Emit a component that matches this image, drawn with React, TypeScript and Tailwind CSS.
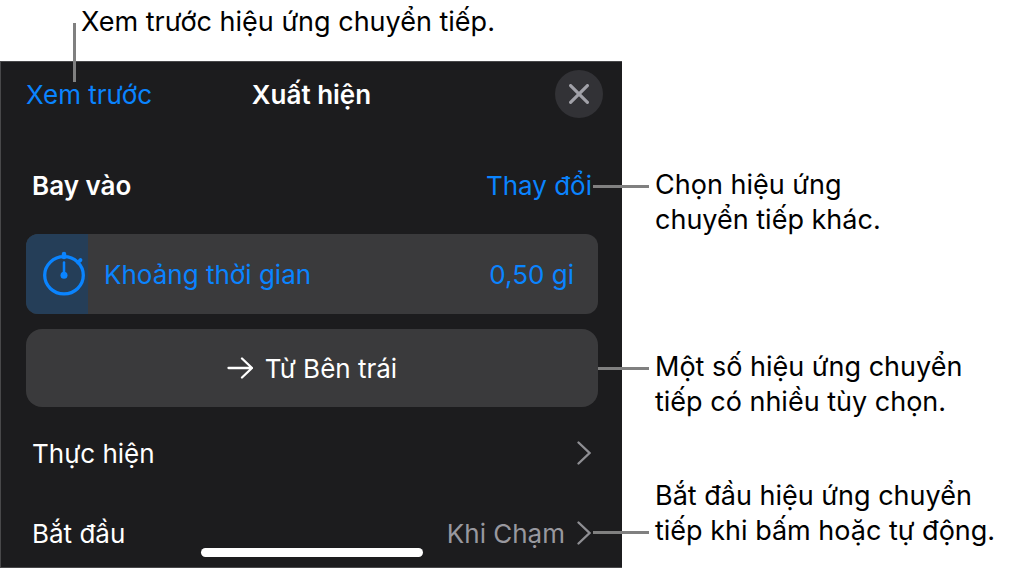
import { useState } from "react";

const CALLOUTS = [
  { id: "change", lines: ["Chọn hiệu ứng", "chuyển tiếp khác."], space: "mt-[106px]", leader: "top-[18px] w-14" },
  { id: "options", lines: ["Một số hiệu ứng chuyển", "tiếp có nhiều tùy chọn."], space: "mt-28", leader: "top-[18px] w-[51px]" },
  { id: "start", lines: ["Bắt đầu hiệu ứng chuyển", "tiếp khi bấm hoặc tự động."], space: "mt-[59px]", leader: "bottom-[14px] w-14" },
];

const MAX_SECONDS = 4.6;

export default function App() {
  const [duration, setDuration] = useState(0.5);

  return (
    <main className="min-h-screen bg-white font-['Inter',sans-serif] text-[27px] leading-[35px] text-black">
      {/* Top callout, its leader reaches down to the preview button */}
      <div className="relative h-[61px] pl-[81px] pt-1">
        <p className="whitespace-nowrap">Xem trước hiệu ứng chuyển tiếp.</p>
        <span className="absolute left-[73px] top-[23px] z-10 h-[59px] w-[3px] bg-[#808080]" />
      </div>

      <div className="grid grid-cols-[622fr_389fr] items-start">
        <BuildPanel duration={duration} onDuration={setDuration} />
        <aside className="min-w-0 pl-[33px]">
          {CALLOUTS.map((c) => (
            <div key={c.id} className={`relative whitespace-nowrap ${c.space}`}>
              <span className={`absolute right-full mr-[6px] h-[3px] bg-[#808080] ${c.leader}`} />
              <p>{c.lines[0]}<br />{c.lines[1]}</p>
            </div>
          ))}
        </aside>
      </div>
    </main>
  );
}

function BuildPanel({ duration, onDuration }: { duration: number; onDuration: (v: number) => void }) {
  return (
    <section className="relative border border-r-0 border-[#48484a] bg-[#1c1c1e] pb-1 text-[26px] text-white">
      <header className="grid h-16 grid-cols-[1fr_auto_1fr] items-center px-[19px]">
        <button className="justify-self-start pl-[6px] text-[#0a84ff]">Xem trước</button>
        <h1 className="font-semibold">Xuất hiện</h1>
        <button aria-label="Đóng" className="flex size-12 items-center justify-center justify-self-end rounded-full bg-[#323236] text-[#a1a1a8]">
          <svg viewBox="0 0 20 20" className="size-5" fill="none" stroke="currentColor" strokeWidth="3.200" strokeLinecap="round"><path d="M1.600 1.600 18.400 18.400M18.400 1.600 1.600 18.400" /></svg>
        </button>
      </header>

      <div className="mt-[27px] flex h-16 items-center justify-between pl-[31px] pr-[30px]">
        <h2 className="font-semibold">Bay vào</h2>
        <button className="text-[#0a84ff]">Thay đổi</button>
      </div>

      {/* Duration slider */}
      <div className="relative ml-[25px] mr-6 mt-[17px] flex h-20 items-center overflow-hidden rounded-xl bg-[#3a3a3c] pl-4 pr-6 text-[#0a84ff]">
        <div className="absolute inset-y-0 left-0 bg-[#253e58]" style={{ width: `${(duration / MAX_SECONDS) * 100}%` }} />
        <Stopwatch />
        <label htmlFor="duration" className="relative ml-[18px]">Khoảng thời gian</label>
        <output htmlFor="duration" className="relative ml-auto">{duration.toFixed(2).replace(".", ",")} gi</output>
        <input id="duration" type="range" min={0} max={MAX_SECONDS} step={0.01} value={duration} onChange={(e) => onDuration(Number(e.target.value))} className="absolute inset-0 size-full cursor-pointer opacity-0" />
      </div>

      <button className="ml-[25px] mt-[15px] flex h-[78px] w-[calc(100%-49px)] items-center justify-center gap-3 rounded-2xl bg-[#3a3a3c]">
        <svg viewBox="0 0 26 22" className="h-[22px] w-[26px]" fill="none" stroke="currentColor" strokeWidth="2.3" strokeLinecap="round" strokeLinejoin="round"><path d="M1.5 11H25M15 1.5 25 11 15 20.5" /></svg>
        Từ Bên trái
      </button>

      <div className="mt-4 flex flex-col gap-5">
        <Row label="Thực hiện" />
        <Row label="Bắt đầu" value="Khi Chạm" />
      </div>

      {/* Home indicator */}
      <div className="absolute bottom-[10px] left-1/2 h-[9px] w-[222px] -translate-x-1/2 rounded-full bg-white" />
    </section>
  );
}

function Row({ label, value }: { label: string; value?: string }) {
  return (
    <button className="flex h-[60px] w-full items-center px-[31px] text-left">
      <span>{label}</span>
      <span className="ml-auto text-[#98989f]">{value}</span>
      <svg viewBox="0 0 14 24" className="ml-3 h-6 w-[14px] text-[#8e8e93]" fill="none" stroke="currentColor" strokeWidth="2.3" strokeLinecap="round"><path d="M1.5 1.5 12.5 12 1.5 22.5" /></svg>
    </button>
  );
}

function Stopwatch() {
  return (
    <svg viewBox="0 0 44 46" className="relative h-[46px] w-11" fill="none" stroke="currentColor" strokeLinecap="round">
      <ellipse cx="22" cy="24.3" rx="19.3" ry="18.6" strokeWidth="3.3" />
      <path d="M22 3V6" strokeWidth="4.5" />
      <path d="M36 11.500 38.500 9" strokeWidth="3.8" />
      <path d="M22 11.500V24" strokeWidth="2.5" />
      <circle cx="22" cy="24.3" r="3.5" fill="currentColor" stroke="none" />
    </svg>
  );
}
